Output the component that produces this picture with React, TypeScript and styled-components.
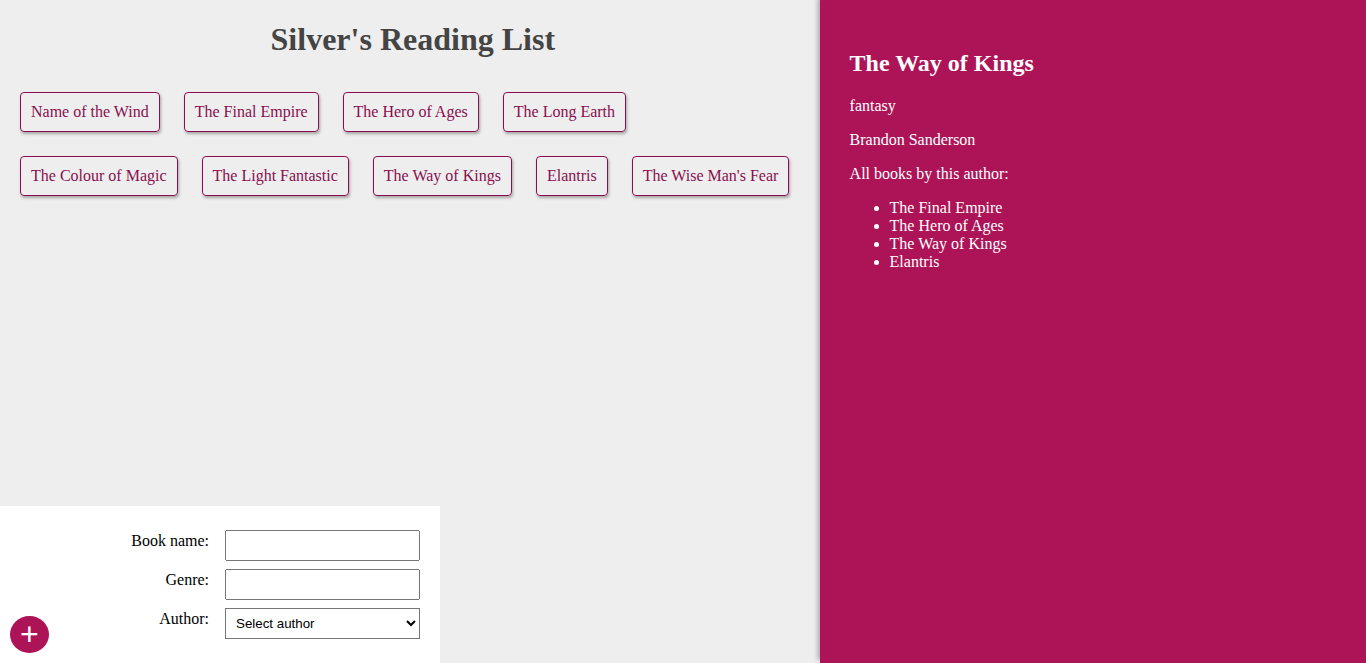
import React from "react";
import styled, { createGlobalStyle } from "styled-components";

const GlobalStyle = createGlobalStyle`
  html, body, #root {
    margin: 0;
    height: 100%;
  }
  body {
    background: #eee;
    font-family: "Liberation Serif", "Times New Roman", serif;
    font-size: 16px;
  }
`;

const Page = styled.div`
  display: flex;
  height: 100vh;
  overflow: hidden;
`;

const LeftColumn = styled.div`
  flex: 0 0 60%;
  min-width: 0;
  display: flex;
  flex-direction: column;
`;

const Main = styled.div`
  padding: 0 2px 0 8px;
`;

const Title = styled.h1`
  color: #444;
  text-align: center;
  font-size: 2em;
  margin: 0.67em 0;
`;

const BookList = styled.ul`
  padding: 0;
  margin: 16px 0;
  list-style: none;
`;

const BookItem = styled.li`
  display: inline-block;
  margin: 12px;
  padding: 10px;
  border-radius: 4px;
  border: 1px solid #880e4f;
  box-shadow: 1px 2px 3px rgba(0, 0, 0, 0.3);
  cursor: pointer;
  color: #880e4f;
`;

const AddForm = styled.form`
  margin-top: auto;
  position: relative;
  background: #fff;
  padding: 20px;
  width: 400px;
`;

const Field = styled.div`
  display: grid;
  grid-template-columns: 1fr 1fr;
  grid-gap: 10px;
`;

const Label = styled.label`
  text-align: right;
  padding: 6px;
`;

const TextInput = styled.input`
  margin: 4px 0;
  padding: 6px;
  box-sizing: border-box;
  width: 100%;
  font-family: "Liberation Sans", Arial, sans-serif;
  font-size: 13.333px;
`;

const Select = styled.select`
  margin: 4px 0;
  padding: 6px;
  box-sizing: border-box;
  width: 100%;
  font-family: "Liberation Sans", Arial, sans-serif;
  font-size: 13.333px;
  background: #fff;
  color: #000;
`;

const AddButton = styled.button`
  position: absolute;
  bottom: 10px;
  left: 10px;
  color: #fff;
  font-size: 2em;
  font-family: "Liberation Sans", Arial, sans-serif;
  line-height: normal;
  background: #ad1457;
  border: 0;
  padding: 0 10px;
  border-radius: 50%;
  cursor: pointer;
`;

const Details = styled.aside`
  flex: 0 0 40%;
  box-sizing: border-box;
  height: 100%;
  background: #ad1457;
  padding: 30px;
  overflow: auto;
  box-shadow: -2px -3px 5px rgba(0, 0, 0, 0.3);
  color: #fff;
`;

const DetailTitle = styled.h2`
  font-size: 1.5em;
  margin: 0.83em 0;
`;

const DetailText = styled.p`
  margin: 16px 0;
`;

const OtherBooks = styled.ul`
  margin: 16px 0;
  padding-left: 40px;
`;

const books = [
  "Name of the Wind",
  "The Final Empire",
  "The Hero of Ages",
  "The Long Earth",
  "The Colour of Magic",
  "The Light Fantastic",
  "The Way of Kings",
  "Elantris",
  "The Wise Man's Fear",
];

const authorBooks = ["The Final Empire", "The Hero of Ages", "The Way of Kings", "Elantris"];

export default function App() {
  return (
    <>
      <GlobalStyle />
      <Page>
        <LeftColumn>
          <Main>
            <Title>Silver's Reading List</Title>
            <BookList>
              {books.map((b) => (
                <BookItem key={b}>{b}</BookItem>
              ))}
            </BookList>
          </Main>
          <AddForm onSubmit={(e) => e.preventDefault()}>
            <Field>
              <Label>Book name:</Label>
              <TextInput type="text" />
            </Field>
            <Field>
              <Label>Genre:</Label>
              <TextInput type="text" />
            </Field>
            <Field>
              <Label>Author:</Label>
              <Select defaultValue="">
                <option value="">Select author</option>
              </Select>
            </Field>
            <AddButton type="submit">+</AddButton>
          </AddForm>
        </LeftColumn>
        <Details>
          <DetailTitle>The Way of Kings</DetailTitle>
          <DetailText>fantasy</DetailText>
          <DetailText>Brandon Sanderson</DetailText>
          <DetailText>All books by this author:</DetailText>
          <OtherBooks>
            {authorBooks.map((b) => (
              <li key={b}>{b}</li>
            ))}
          </OtherBooks>
        </Details>
      </Page>
    </>
  );
}
